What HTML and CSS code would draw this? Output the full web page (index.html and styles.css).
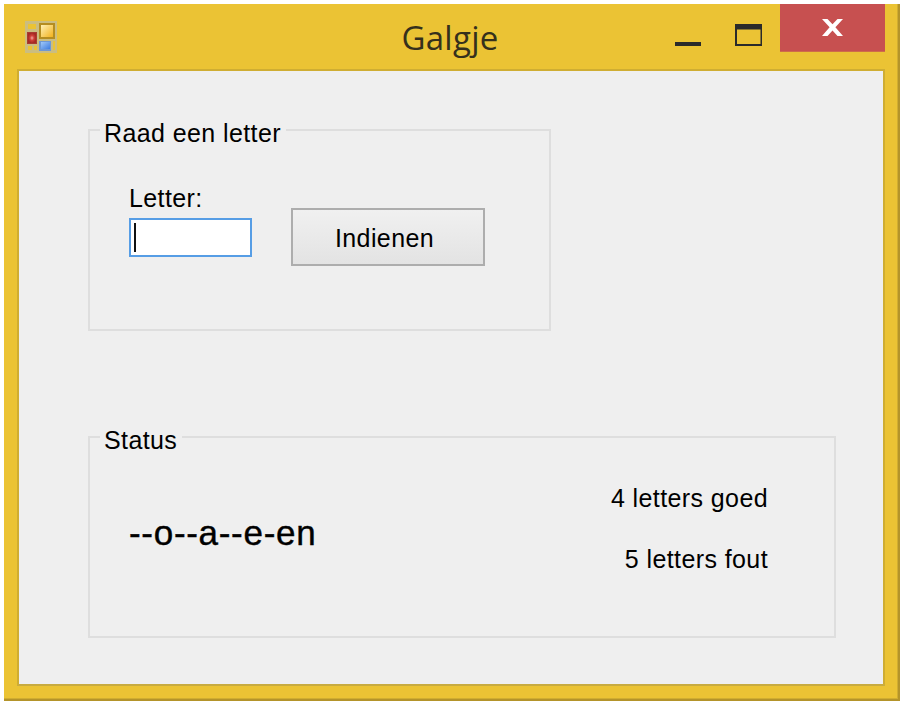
FILE: index.html
```html
<!DOCTYPE html>
<html lang="nl">
<head>
<meta charset="utf-8">
<title>Galgje</title>
<link rel="stylesheet" href="styles.css">
</head>
<body>
<div class="window">
  <header class="titlebar">
    <svg class="app-icon" width="32" height="32" viewBox="0 0 32 32">
      <defs>
        <radialGradient id="red"><stop offset="0" stop-color="#f4aaa0"/><stop offset=".5" stop-color="#cf4038"/><stop offset="1" stop-color="#a52a24"/></radialGradient>
        <linearGradient id="gold" x1="0" y1="0" x2="1" y2="1"><stop offset="0" stop-color="#fff0b4"/><stop offset="1" stop-color="#f3b21c"/></linearGradient>
        <linearGradient id="blue" x1="0" y1="0" x2="1" y2="1"><stop offset="0" stop-color="#a0c8f8"/><stop offset="1" stop-color="#3f7de0"/></linearGradient>
      </defs>
      <path fill="#cbbd80" fill-rule="evenodd" d="M0 0h32v32H0zM3 3v5h8V3zM3 25v4h4v-4zM9 25v4h3v-4zM28 20v9h2v-9z"/>
      <rect x="2" y="11" width="10" height="12" fill="#a93b30"/>
      <rect x="3" y="12" width="8" height="10" fill="url(#red)"/>
      <rect x="14" y="2" width="16" height="16" fill="#b58d20"/>
      <rect x="16" y="4" width="12" height="12" fill="url(#gold)"/>
      <rect x="14" y="20" width="12" height="10" fill="#6e98d4"/>
      <rect x="16" y="21" width="9" height="7" fill="url(#blue)"/>
    </svg>
    <h1 class="title">Galgje</h1>
    <div class="controls">
      <button class="control minimize" aria-label="Minimaliseren"><svg width="26" height="4" viewBox="0 0 26 4"><path fill="#2a2a2a" d="M0 0h26v4H0z"/></svg></button>
      <button class="control maximize" aria-label="Maximaliseren"><svg width="27" height="22" viewBox="0 0 27 22"><path fill="#2a2a2a" fill-rule="evenodd" d="M0 0h27v22H0zM2 5.500v14.500h23.500V5.500z"/></svg></button>
      <button class="control close" aria-label="Sluiten"><svg width="21" height="17" viewBox="0 0 21 17"><path fill="#fff" d="M0 0h5.500l5 5.300L15.500 0H21l-7.600 8.300L21 17h-5.500l-5-5.500-5 5.500H0l7.600-8.700z"/></svg></button>
    </div>
  </header>
  <main class="client">
    <section class="group guess">
      <h2 class="caption">Raad een letter</h2>
      <div class="field">
        <label class="label" for="letter">Letter:</label>
        <div class="input" id="letter"><span class="caret"></span></div>
      </div>
      <button class="submit">Indienen</button>
    </section>
    <section class="group status">
      <h2 class="caption">Status</h2>
      <div class="word">--o--a--e-en</div>
      <div class="scores">
        <div>4 letters goed</div>
        <div>5 letters fout</div>
      </div>
    </section>
  </main>
</div>
</body>
</html>
```
FILE: styles.css
```css
* { box-sizing: border-box; }
body {
  margin: 0;
  padding: 4px;
  background: #fff;
  color: #000;
  font: 25px/30px "Liberation Sans", Arial, sans-serif;
  letter-spacing: 0.4px;
}
button { margin: 0; padding: 0; border: 0; background: none; font: inherit; letter-spacing: inherit; color: inherit; }
svg { display: block; }
.window {
  width: 896px;
  height: 697px;
  padding: 0 13px 13px 13px;
  background: #ebc334;
  border: solid #b4942a;
  border-width: 0 2px 2px 0;
  box-shadow: inset -1px -1px #d0ad30;
}
.titlebar { display: flex; height: 65px; position: relative; }
.app-icon { margin: 17px 0 0 8px; }
.title {
  margin: 11px 0 0;
  width: 786px;
  text-align: center;
  font: 400 33px/46px "Open Sans", sans-serif;
  letter-spacing: 0.3px;
  color: #35301c;
  position: absolute;
  left: 40px;
  top: 0;
}
.controls { display: flex; position: absolute; right: 0; top: 0; }
.control { height: 48px; }
.minimize { width: 60px; padding-top: 31px; }
.maximize { width: 45px; padding-top: 13px; }
.close { width: 105px; background: #c75050; display: flex; justify-content: center; padding: 15px 1px 0 0; border-bottom: 1px solid #ce6c4a; }
.client {
  height: 617px;
  padding: 58px 47px 0 69px;
  background: #efefef;
  border: 2px solid #cfad32;
  border-bottom-color: #c8ab40;
}
.group { display: flex; border: 2px solid #dedede; position: relative; }
.caption {
  position: absolute;
  left: 10px;
  top: -13px;
  margin: 0;
  padding: 0 5px 0 4px;
  background: #efefef;
  font-size: inherit;
  font-weight: 400;
}
.guess { width: 463px; height: 202px; }
.field { margin: 52px 0 0 39px; width: 123px; }
.label { display: block; height: 35px; }
.input { height: 39px; background: #fff; border: 2px solid #569de5; padding: 3px 0 0 3px; }
.caret { display: block; width: 2px; height: 29px; background: #111; }
.submit {
  width: 194px;
  height: 58px;
  margin: 77px 0 0 39px;
  border: 2px solid #adadad;
  background: linear-gradient(#f0f0f0, #e3e3e3);
  padding: 1px 7px 0 0;
}
.status { width: 748px; height: 202px; margin-top: 105px; justify-content: space-between; }
.word {
  margin: 75px 0 0 39px;
  font-size: 35px;
  line-height: 40px;
  letter-spacing: 0.7px;
  -webkit-text-stroke: 0.4px #000;
}
.scores { display: flex; flex-direction: column; gap: 31px; margin: 45px 66px 0 0; text-align: right; }
```
